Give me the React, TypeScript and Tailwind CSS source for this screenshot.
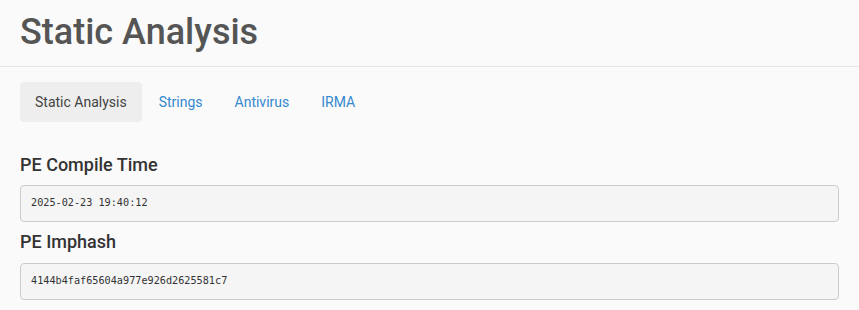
import React from "react";

const tabs = ["Static Analysis", "Strings", "Antivirus", "IRMA"];

const mono = { fontFamily: "'DejaVu Sans Mono', 'Liberation Mono', monospace" };

export default function App() {
  return (
    <div className="min-h-[310px] w-full bg-[#fafafa] text-[#333]" style={{ fontFamily: "Roboto, 'Liberation Sans', sans-serif" }}>
      <div className="border-b border-[#e5e5e5] px-[20px] pt-[13px] pb-[13px]">
        <h1 className="m-0 text-[36px] font-medium leading-[1.1] text-[#555]">Static Analysis</h1>
      </div>
      <div className="px-[20px] pt-[15px]">
        <ul className="m-0 flex list-none p-0">
          {tabs.map((t, i) => (
            <li key={t} className={i === 0 ? "" : "ml-[2px]"}>
              <a
                href="#"
                className={
                  "block rounded-[4px] px-[15px] py-[10px] text-[14px] leading-[20px] " +
                  (i === 0 ? "bg-[#eeeeee] text-[#444]" : "text-[#3589d0]")
                }
              >
                {t}
              </a>
            </li>
          ))}
        </ul>
        <div className="pt-[33px]">
          <h3 className="m-0 mb-[11px] text-[18px] font-medium leading-[1.1] text-[#333]">PE Compile Time</h3>
          <pre
            className="m-0 mb-[10.5px] rounded-[4px] border border-[#cccccc] bg-[#f5f5f5] px-[10px] py-[10px] text-[10.2px] leading-[1.42857] text-[#333]"
            style={mono}
          >
            2025-02-23 19:40:12
          </pre>
          <h3 className="m-0 mb-[11px] text-[18px] font-medium leading-[1.1] text-[#333]">PE Imphash</h3>
          <pre
            className="m-0 mb-[10px] rounded-[4px] border border-[#cccccc] bg-[#f5f5f5] px-[10px] py-[10px] text-[10.2px] leading-[1.42857] text-[#333]"
            style={mono}
          >
            4144b4faf65604a977e926d2625581c7
          </pre>
        </div>
      </div>
    </div>
  );
}
